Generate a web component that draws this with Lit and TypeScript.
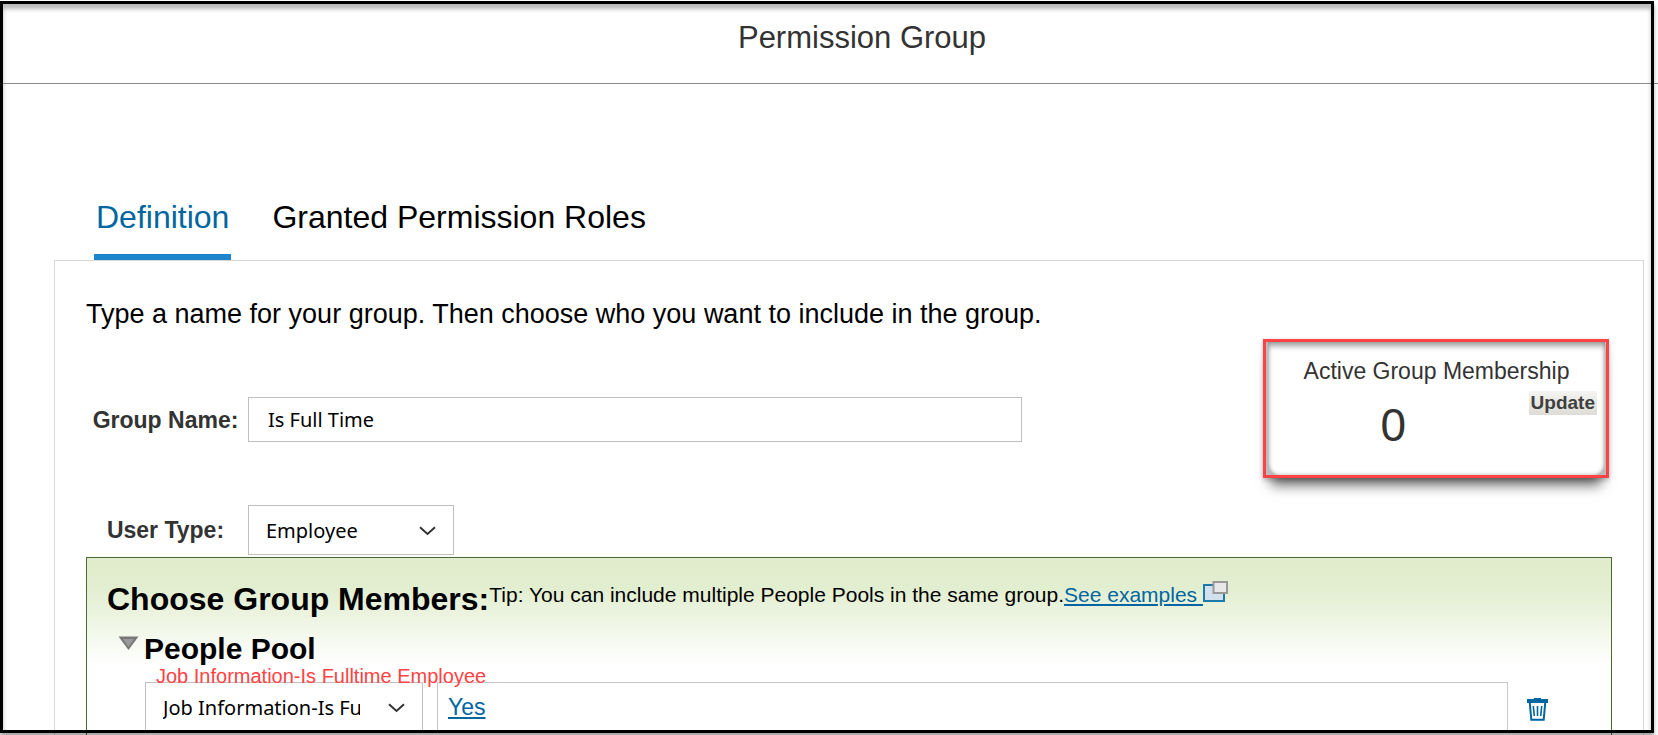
import { LitElement, html, css } from "lit";
import { customElement } from "lit/decorators.js";

const chevron = html`<svg class="chevron" width="17" height="10" viewBox="0 0 17 10" aria-hidden="true">
  <path d="M1 1.2 L8.5 8 L16 1.2" fill="none" stroke="#333" stroke-width="2" />
</svg>`;

@customElement("app-root")
export class AppRoot extends LitElement {
  static styles = css`
    :host {
      display: block;
      height: 100vh;
      overflow: hidden auto;
      scrollbar-width: none;
      background: #fff;
      color: #000;
      font-family: "Liberation Sans", Arial, sans-serif;
    }
    * {
      box-sizing: border-box;
    }
    h1,
    h2,
    h3,
    p {
      margin: 0;
    }
    a {
      color: #0066a1;
      text-decoration-thickness: 2px;
      text-underline-offset: 2px;
    }
    .frame {
      position: fixed;
      inset: 1px 4px 2px 0;
      border: 3px solid #000;
      box-shadow: 0 4px 4px rgba(0, 0, 0, 0.35), inset 0 5px 4px rgba(0, 0, 0, 0.27);
      pointer-events: none;
      z-index: 2;
    }
    .header {
      padding: 20px 0 28px 66px;
      border-bottom: 1px solid #8c8c8c;
      text-align: center;
    }
    .title {
      font-size: 31px;
      line-height: 35px;
      font-weight: 400;
      color: #333;
    }
    .content {
      padding: 115px 14px 0 54px;
    }
    .tabs {
      display: flex;
      gap: 39px;
      padding-left: 40px;
    }
    .tab {
      font: inherit;
      font-size: 32px;
      line-height: 36px;
      color: #000;
      background: none;
      border: 0;
      border-bottom: 6px solid transparent;
      padding: 0 2px 19px;
    }
    .tab.active {
      color: #0066a1;
      border-bottom-color: #1b84cb;
    }
    .panel {
      border: 1px solid #d8d8d8;
      padding: 38px 31px 31px;
    }
    .intro {
      font-size: 27px;
      line-height: 30px;
    }
    .details {
      display: flex;
      justify-content: space-between;
      align-items: flex-start;
      padding-bottom: 2px;
    }
    .fields {
      display: grid;
      grid-template-columns: 162px minmax(0, 774px);
      row-gap: 63px;
      align-items: center;
      flex: 0 1 936px;
      padding-top: 68px;
    }
    .label {
      font-size: 23px;
      line-height: 26px;
      font-weight: 700;
      color: #333;
      text-align: center;
      padding-right: 3px;
    }
    .input,
    .select {
      width: 100%;
      font-family: "Noto Sans", sans-serif;
      font-size: 20px;
      color: #000;
      background: #fff;
      border: 1px solid #bfbfbf;
      border-radius: 0;
      appearance: none;
    }
    .input {
      height: 45px;
      padding: 0 19px;
    }
    .select {
      display: block;
      height: 50px;
      padding: 0 62px 0 17px;
    }
    .picker {
      position: relative;
      flex: none;
    }
    .picker.type {
      width: 206px;
    }
    .picker.field {
      width: 278px;
    }
    .chevron {
      position: absolute;
      right: 18px;
      top: 21px;
      pointer-events: none;
    }
    .membership {
      position: relative;
      flex: none;
      width: 346px;
      margin: 10px 3px 0 0;
      border: 3px solid #ff4343;
      background: #bbb;
      box-shadow: 0 15px 12px -8px rgba(0, 0, 0, 0.6), 0 2px 5px rgba(0, 0, 0, 0.25);
    }
    .card {
      display: grid;
      grid-template-columns: 1fr auto;
      padding: 16px 8px 24px 3px;
      margin: 0 1px 0 2px;
      border-radius: 0 0 12px 12px;
      background: #fff;
      color: #333;
      box-shadow: inset 0 5px 5px rgba(0, 0, 0, 0.28), inset 0 0 4px rgba(0, 0, 0, 0.3);
    }
    .caption {
      grid-column: 1 / -1;
      padding-left: 5px;
      font-size: 23px;
      line-height: 26px;
      font-weight: 400;
      text-align: center;
    }
    .count {
      font-size: 46px;
      line-height: 52px;
      text-align: center;
      padding: 15px 13px 0 0;
    }
    .update {
      align-self: start;
      margin-top: 7px;
      padding: 0 2px;
      border: 0;
      font: inherit;
      font-size: 19px;
      line-height: 24px;
      font-weight: 700;
      color: #404040;
      background: linear-gradient(#f4f4f2, #dddcd6);
    }
    .members {
      border: 1px solid #4a6a35;
      padding: 23px 0 30px;
      background: linear-gradient(#e0edcc 0, #e2eed0 30px, #fff 108px);
    }
    .heading-row {
      display: flex;
      align-items: flex-start;
      padding-left: 20px;
    }
    .heading {
      font-size: 32px;
      line-height: 36px;
    }
    .tip {
      font-size: 21px;
      line-height: 22px;
    }
    .popout {
      vertical-align: baseline;
    }
    .pool-title {
      display: flex;
      align-items: flex-start;
      gap: 5px;
      padding: 15px 0 0 31px;
    }
    .pool-name {
      font-size: 30px;
      line-height: 34px;
    }
    .toggle,
    .remove {
      flex: none;
      display: block;
      border: 0;
      padding: 0;
      background: none;
    }
    .toggle {
      padding-top: 4px;
    }
    .criteria {
      position: relative;
      display: flex;
      align-items: flex-start;
      padding: 16px 63px 0 58px;
    }
    .note {
      position: absolute;
      left: 69px;
      top: -1px;
      font-size: 20px;
      line-height: 22px;
      color: #ff4343;
      z-index: 1;
    }
    .values {
      flex: 1;
      height: 50px;
      margin: 0 19px 0 14px;
      padding: 11px 10px;
      border: 1px solid #c8c8c8;
      background: #fff;
      font-size: 23px;
      line-height: 26px;
    }
    .remove {
      padding-top: 16px;
    }
    .toggle svg,
    .remove svg {
      display: block;
    }
  `;

  render() {
    return html`
      <header class="header"><h1 class="title">Permission Group</h1></header>
      <main class="content">
        <div class="tabs" role="tablist">
          <button class="tab active" role="tab" aria-selected="true">Definition</button>
          <button class="tab" role="tab" aria-selected="false">Granted Permission Roles</button>
        </div>
        <section class="panel">
          <p class="intro">Type a name for your group. Then choose who you want to include in the group.</p>
          <div class="details">
            <div class="fields">
              <label class="label" for="group-name">Group Name:</label>
              <input class="input" id="group-name" type="text" value="Is Full Time" />
              <label class="label" for="user-type">User Type:</label>
              <div class="picker type">
                <select class="select" id="user-type">
                  <option>Employee</option>
                </select>
                ${chevron}
              </div>
            </div>
            <aside class="membership">
              <div class="card">
                <h3 class="caption">Active Group Membership</h3>
                <div class="count">0</div>
                <button class="update">Update</button>
              </div>
            </aside>
          </div>
          <section class="members">
            <div class="heading-row">
              <h2 class="heading">Choose Group Members:</h2>
              <p class="tip">Tip: You can include multiple People Pools in the same group.<a href="#">See examples </a><svg class="popout" width="25" height="21" viewBox="0 0 25 21" aria-hidden="true">
                  <rect x="1" y="4" width="20" height="16" fill="#d3e0ee" stroke="#1b7aaa" stroke-width="2" />
                  <rect x="10.5" y="1" width="13.5" height="11" fill="#e8e8e8" stroke="#999" stroke-width="2" />
                </svg></p>
            </div>
            <div class="pool-title">
              <button class="toggle" aria-label="Collapse People Pool">
                <svg width="21" height="15" viewBox="0 0 21 15">
                  <path d="M0.5 0.5 H20.5 L10.5 14 Z" fill="#777" />
                  <path d="M5 3 H16 L10.5 11 Z" fill="#999" />
                </svg>
              </button>
              <h3 class="pool-name">People Pool</h3>
            </div>
            <div class="criteria">
              <label class="note" for="criterion">Job Information-Is Fulltime Employee</label>
              <div class="picker field">
                <select class="select" id="criterion">
                  <option>Job Information-Is Fulltime Employee</option>
                </select>
                ${chevron}
              </div>
              <div class="values"><a href="#">Yes</a></div>
              <button class="remove" aria-label="Delete">
                <svg width="21" height="23" viewBox="0 0 21 23">
                  <path d="M0 1 H7 V0 H14 V1 H21 V5 H0 Z" fill="#0066a1" />
                  <path d="M2.8 5 L4.3 21.8 H16.7 L18.2 5" fill="#fff" stroke="#0066a1" stroke-width="2" />
                  <path d="M6.3 8 L7.3 18 M10.5 8 V18 M14.7 8 L13.7 18" stroke="#0066a1" stroke-width="1.6" />
                </svg>
              </button>
            </div>
          </section>
        </section>
      </main>
      <div class="frame"></div>
    `;
  }
}
